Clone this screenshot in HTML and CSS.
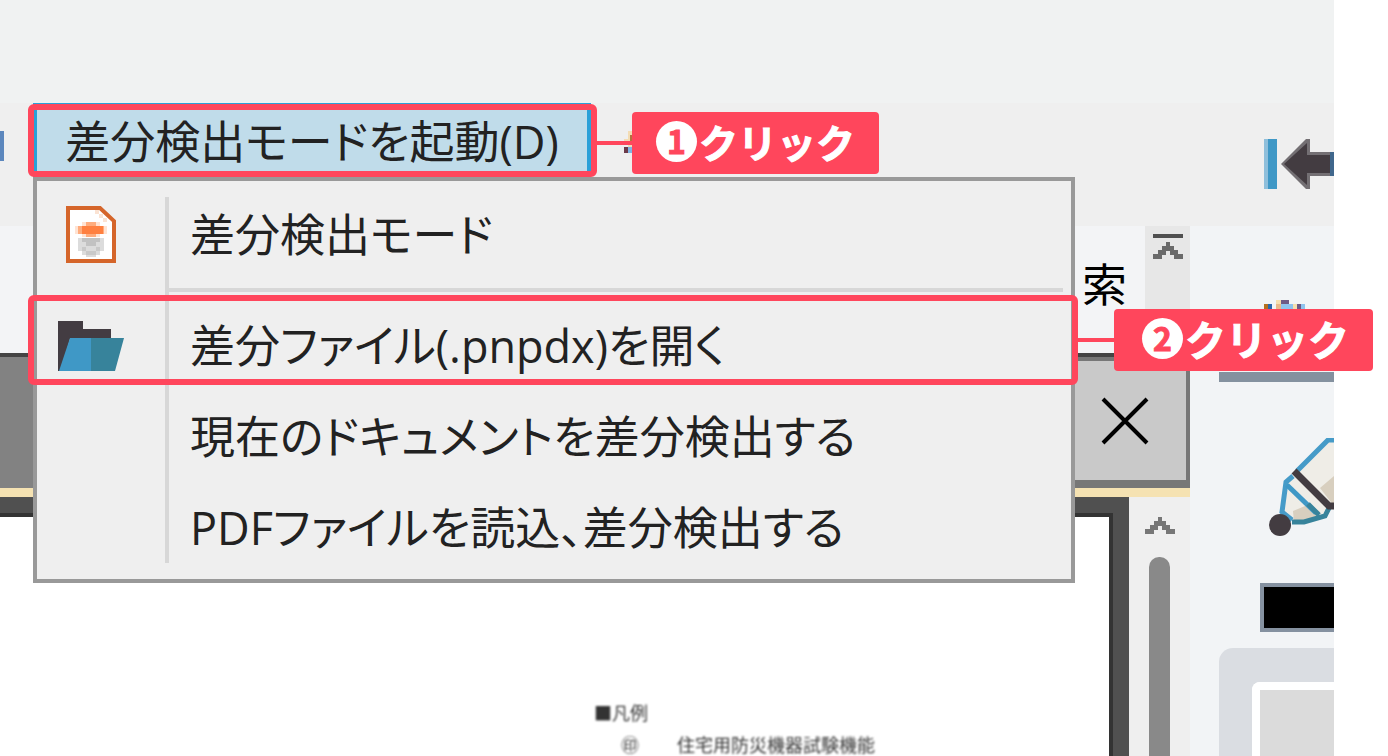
FILE: index.html
```html
<!DOCTYPE html>
<html lang="ja">
<head>
  <meta charset="UTF-8">
  <title>差分検出モード</title>
  <link rel="stylesheet" href="styles.css">
</head>
<body>
<main class="app">

  <div class="titlebar"></div>

  <div class="toolbar">
    <span class="tool-edge"></span>

    <div class="menu-anchor">
      <button type="button" class="menu-button">差分検出モードを起動(D)</button>
      <div class="highlight highlight-button"></div>
      <div class="callout callout-first">
        <span class="callout-label"><span class="step">1</span>クリック</span>
      </div>
    </div>

    <svg class="caret-icon" width="14" height="26" viewBox="0 0 14 26" shape-rendering="crispEdges">
      <path d="M8 4 H14 V26 H8 V18 H4 V12 H8 Z" fill="#f3dcb4"/>
      <path d="M10 8 H14 V16 H10 Z" fill="#b5713f"/>
      <path d="M4 20 H8 V26 H4 Z" fill="#6b3a4a"/>
      <path d="M8 20 H14 V26 H8 Z" fill="#7fb6e6"/>
    </svg>

    <svg class="arrow-icon" width="70" height="50" viewBox="0 0 70 50">
      <rect width="4" height="50" fill="#8fbfdb"/>
      <rect x="4" width="9" height="50" fill="#3f98c6"/>
      <path d="M17 25 L42 0 H46 V13 H70 V37 H46 V50 H42 Z" fill="#736f73"/>
      <path d="M20 25 L43 4 V16 H70 V34 H43 V46 Z" fill="#433c41"/>
      <rect x="66" y="13" width="4" height="24" fill="#40678c"/>
    </svg>

    <ul class="menu">
      <li class="menu-item">
        <svg class="item-icon" width="66" height="60" viewBox="0 0 66 60">
          <path d="M10 3 H42 L56 16 V56 H10 Z" fill="#fff" stroke="#d5652a" stroke-width="4"/>
          <g shape-rendering="crispEdges">
            <path d="M37 5 H41 V9 H45 V13 H49 V17 H45 V13 H41 V9 H37 Z" fill="#fbe3d3"/>
            <path d="M20 33 H46 V46 H42 V50 H38 V52 H28 V50 H24 V46 H20 Z" fill="#dcdcdc"/>
            <path d="M24 33 H42 V37 H38 V41 H28 V37 H24 Z" fill="#c2c2c2"/>
            <path d="M24 42 H28 V46 H38 V42 H42 V46 H38 V50 H28 V46 H24 Z" fill="#c9c9c9"/>
            <path d="M17 21 H24 V17 H42 V21 H49 V29 H42 V32 H24 V29 H17 Z" fill="#ffe3d3"/>
            <path d="M28 17 H38 V21 H46 V29 H38 V32 H28 V29 H20 V21 H28 Z" fill="#ffac7d"/>
            <path d="M24 21 H45 V29 H24 Z" fill="#ff8040"/>
          </g>
        </svg>
        <a href="#">差分検出モード</a>
      </li>
      <li class="separator"></li>
      <li class="menu-item">
        <svg class="item-icon" width="66" height="50" viewBox="0 0 66 50">
          <path d="M0 0 H25 V8 H53 V18 H12 L3 50 H0 Z" fill="#433c42"/>
          <path d="M12 17 H34 V50 H1 Z" fill="#3f98c6"/>
          <path d="M33 17 H66 L57 50 H33 Z" fill="#37839b"/>
        </svg>
        <a href="#">差分ファイル(.pnpdx)を開く</a>
        <div class="highlight highlight-item"></div>
        <div class="callout callout-second">
          <span class="callout-label"><span class="step">2</span>クリック</span>
        </div>
      </li>
      <li class="menu-item">
        <span class="item-icon"></span>
        <a href="#">現在のドキュメントを差分検出する</a>
      </li>
      <li class="menu-item">
        <span class="item-icon"></span>
        <a href="#">PDFファイルを読込、差分検出する</a>
      </li>
    </ul>
  </div>

  <div class="workspace">
    <div class="document-area">
      <div class="search-row">
        <span class="search-text">索</span>
        <button type="button" class="collapse-button" aria-label="折りたたむ">
          <svg width="30" height="30" viewBox="0 0 30 30" shape-rendering="crispEdges">
            <rect width="30" height="4" fill="#505050"/>
            <path d="M13 8 H17 V12 H21 V16 H25 V20 H30 V25 H21 V21 H17 V17 H13 V21 H9 V25 H0 V20 H5 V16 H9 V12 H13 Z" fill="#6a6a6a"/>
            <path d="M9 12 H21 V17 H9 Z M5 17 H11 V21 H5 Z M19 17 H25 V21 H19 Z" fill="#6a6a6a"/>
          </svg>
        </button>
      </div>

      <div class="tab-row">
        <button type="button" class="close-button" aria-label="閉じる">
          <svg width="50" height="50" viewBox="0 0 50 50">
            <path d="M3 3 L47 47 M47 3 L3 47" stroke="#000" stroke-width="4"/>
          </svg>
        </button>
      </div>

      <div class="viewer">
        <div class="page">
          <div class="legend">
            <div class="legend-title">■凡例</div>
            <div class="legend-row"><span>㊞</span><span>住宅用防災機器試験機能</span></div>
          </div>
        </div>
        <div class="scrollbar">
          <svg width="30" height="18" viewBox="0 0 30 18" shape-rendering="crispEdges">
            <path d="M13 0 H17 V4 H21 V8 H25 V12 H30 V17 H21 V13 H17 V9 H13 V13 H9 V17 H0 V12 H5 V8 H9 V4 H13 Z" fill="#777"/>
            <path d="M9 4 H21 V9 H9 Z M5 9 H11 V13 H5 Z M19 9 H25 V13 H19 Z" fill="#777"/>
          </svg>
          <div class="thumb"></div>
        </div>
      </div>
    </div>

    <aside class="side-panel">
      <svg class="panel-mark" width="70" height="10" viewBox="0 0 70 10" shape-rendering="crispEdges">
        <path d="M0 4 H4 V10 H0 Z" fill="#b5701f"/>
        <path d="M4 4 H8 V10 H4 Z" fill="#2a66ad"/>
        <path d="M12 0 H17 V4 H12 Z M29 4 H33 V10 H29 Z" fill="#f5dfae"/>
        <path d="M17 0 H25 V4 H17 Z M33 4 H37 V10 H33 Z" fill="#6e5a86"/>
        <path d="M12 4 H17 V10 H12 Z" fill="#e9b98a"/>
        <path d="M17 4 H29 V10 H17 Z M37 4 H41 V10 H37 Z" fill="#8fc3ee"/>
      </svg>
      <div class="panel-line"></div>
      <svg class="pen-icon" width="66" height="100" viewBox="0 0 66 100">
        <path d="M66 2 H59 L28 34 L66 72 Z" fill="#efede7"/>
        <path d="M66 38 L52 50 L66 68 Z" fill="#d8cfbf"/>
        <path d="M27 37 L18 46 L14 77 L26 84 L55 77 L61 69 Z" fill="#efede7"/>
        <path d="M25 73 L42 66 L52 74 L46 82 L26 84 Z" fill="#d8cfbf"/>
        <path d="M66 2 H60 L29 33 M25 38 L18 44 L14 74 L24 82" fill="none" stroke="#469bc8" stroke-width="5"/>
        <path d="M19 47 L48 75" stroke="#3f98c6" stroke-width="5"/>
        <path d="M24 84 H36 L57 78 L61 70 M40 66 L51 77" fill="none" stroke="#37839b" stroke-width="5"/>
        <path d="M26 33 L61 68 H66" fill="none" stroke="#433c41" stroke-width="7"/>
        <circle cx="12" cy="87" r="11" fill="#433c41"/>
      </svg>
      <div class="swatch"></div>
      <div class="card"><div class="card-body"></div></div>
    </aside>
  </div>

</main>
</body>
</html>
```
FILE: styles.css
```css
* {
  box-sizing: border-box;
}

body {
  margin: 0;
  background: #fff;
  font-family: "Open Sans", "Noto Sans CJK JP", sans-serif;
  font-size: 45px;
  color: #222;
}

button {
  margin: 0;
  padding: 0;
  border: none;
  background: none;
  font: inherit;
  color: inherit;
}

svg {
  display: block;
  flex: none;
}

.app {
  display: flex;
  flex-direction: column;
  height: 100vh;
  margin-right: 54px;
}

.titlebar {
  flex: none;
  height: 103px;
  background: #f0f2f2;
}

.toolbar {
  position: relative;
  z-index: 1;
  flex: none;
  display: flex;
  height: 123px;
  background: #efefef;
}

.tool-edge {
  width: 4px;
  height: 30px;
  margin: 28px 29px 0 0;
  background: #5c87bd;
}

.menu-anchor {
  position: relative;
  z-index: 1;
  height: 74px;
}

.menu-button {
  width: 558px;
  height: 74px;
  padding-top: 4px;
  border: solid #2ba0d8;
  border-width: 2px 4px;
  background: #c0dcea;
  line-height: 66px;
  white-space: nowrap;
  font-feature-settings: "palt";
}

.caret-icon {
  margin: 24px 0 0 29px;
}

.arrow-icon {
  margin: 36px 0 0 auto;
}

/* drop-down menu */

.menu {
  position: absolute;
  top: 74px;
  left: 33px;
  right: 259px;
  margin: 0;
  padding: 10px 0 4px;
  border: 4px solid #999;
  background: #efefef;
  list-style: none;
}

.menu::before {
  content: "";
  position: absolute;
  top: 16px;
  bottom: 16px;
  left: 128px;
  width: 4px;
  background: #d7d7d7;
}

.menu-item {
  position: relative;
  display: flex;
  align-items: center;
  height: 91px;
  padding: 0 0 4px 21px;
}

.menu-item a {
  color: inherit;
  text-decoration: none;
  white-space: nowrap;
  line-height: 80px;
  font-feature-settings: "palt";
}

.item-icon {
  width: 66px;
  margin-right: 66px;
}

.separator {
  height: 4px;
  margin: 6px 8px 10px 132px;
  background: #d7d7d7;
}

/* step markers */

.highlight {
  position: absolute;
  border: 6px solid #ff465c;
  border-radius: 6px;
}

.highlight-button {
  inset: 1px -6px 0 -5px;
}

.highlight-item {
  inset: -7px -7px 8px -9px;
}

.callout {
  position: absolute;
  left: 100%;
  display: flex;
  align-items: center;
}

.callout::before {
  content: "";
  width: 36px;
  height: 4px;
  background: #ff465c;
}

.callout-first {
  top: 9px;
  margin-left: 5px;
  font-size: 39px;
}

.callout-second {
  top: 7px;
  margin-left: 7px;
  font-size: 41px;
}

.callout-label {
  display: flex;
  align-items: center;
  padding: 0 24px 4px;
  border-radius: 4px;
  background: #ff465c;
  color: #fff;
  font-family: "Noto Sans CJK JP", sans-serif;
  font-weight: bold;
  line-height: 58px;
  white-space: nowrap;
  -webkit-text-stroke: 1px;
}

.callout-second .callout-label {
  padding-left: 28px;
}

.step {
  width: 41px;
  height: 41px;
  margin-right: 2px;
  border-radius: 50%;
  background: #fff;
  color: #ff465c;
  font-size: 32px;
  line-height: 39px;
  text-align: center;
}

/* document */

.workspace {
  flex: 1;
  display: flex;
  min-height: 0;
  overflow: hidden;
}

.document-area {
  flex: 1;
  display: flex;
  flex-direction: column;
  min-width: 0;
}

.search-row {
  flex: none;
  display: flex;
  justify-content: flex-end;
  height: 127px;
  background: #f3f4f6;
}

.search-text {
  margin-right: 18px;
  color: #000;
  line-height: 118px;
}

.collapse-button {
  display: flex;
  justify-content: center;
  width: 45px;
  height: 100px;
  padding-top: 8px;
  background: #e7e7e7;
}

.tab-row {
  flex: none;
  display: flex;
  justify-content: flex-end;
  height: 144px;
  border-top: 4px solid #444;
  border-bottom: 9px solid #f5e2b2;
  background: #828282;
}

.close-button {
  display: flex;
  justify-content: center;
  align-items: center;
  width: 126px;
  border: solid #777;
  border-width: 4px 4px 8px 0;
  background: #c9c9c9;
}

.viewer {
  flex: 1;
  display: flex;
  min-height: 0;
}

.page {
  flex: 1;
  padding-top: 184px;
  border: solid #505050;
  border-width: 16px 16px 0 0;
  background: #fff;
  box-shadow: inset -4px 4px #333;
  overflow: hidden;
}

.legend {
  margin-left: 594px;
  color: #333;
  font-size: 18px;
  line-height: 32px;
  filter: blur(1px);
}

.legend-row {
  display: flex;
  gap: 38px;
  padding-left: 27px;
}

.scrollbar {
  display: flex;
  flex-direction: column;
  align-items: center;
  gap: 22px;
  width: 61px;
  padding-top: 20px;
  background: #efefef;
}

.thumb {
  flex: 1;
  width: 21px;
  border-radius: 10px 10px 0 0;
  background: #898989;
}

/* right panel */

.side-panel {
  display: flex;
  flex-direction: column;
  align-items: flex-end;
  width: 144px;
  background: #f2f4f6;
}

.panel-mark {
  margin-top: 74px;
}

.panel-line {
  flex: none;
  width: 115px;
  height: 10px;
  margin-top: 62px;
  background: #84919f;
}

.pen-icon {
  margin-top: 56px;
}

.swatch {
  flex: none;
  width: 74px;
  height: 49px;
  margin-top: 45px;
  border: 4px solid #8591a0;
  border-right: none;
  background: #000;
}

.card {
  flex: 1;
  width: 115px;
  margin-top: 16px;
  padding: 34px 0 0 33px;
  border-radius: 14px 0 0 0;
  background: #dadde2;
}

.card-body {
  height: 100%;
  border: solid #fff;
  border-width: 8px 0 0 8px;
  border-radius: 8px 0 0 0;
  background: #dbdbdb;
}
```
